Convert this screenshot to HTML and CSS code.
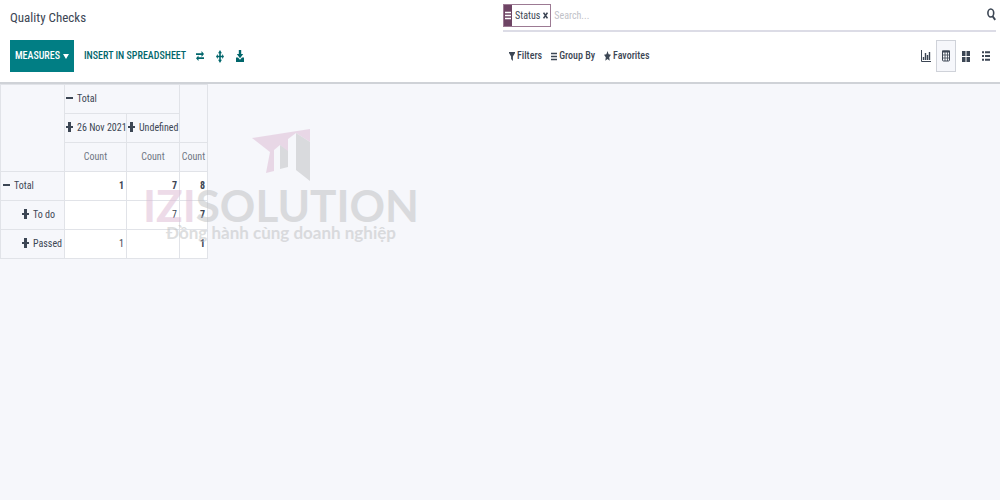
FILE: index.html
```
<!DOCTYPE html>
<html lang="en">

<head>
  <meta charset="UTF-8">
  <meta name="viewport" content="width=device-width, initial-scale=1.0">
  <title>Quality Checks</title>
  <link rel="stylesheet" href="styles.css">
</head>

<body>
  <header class="control-panel">
    <div class="panel-row">
      <h1 class="title">Quality Checks</h1>
      <div class="search-box">
        <div class="facet">
          <span class="facet-icon">
            <svg width="6" height="9" viewBox="0 0 6 9"><path d="M0 1.5h6M0 4.5h6M0 7.5h6" stroke="currentColor" stroke-width="1.6"/></svg>
          </span>
          <span class="facet-label">Status</span>
          <button class="facet-remove" type="button" aria-label="Remove">
            <svg width="5" height="7" viewBox="0 0 5 7"><path d="M.6.7l3.8 5.6M4.4.7L.6 6.3" stroke="currentColor" stroke-width="1.5"/></svg>
          </button>
        </div>
        <input class="search-input" type="text" placeholder="Search..." aria-label="Search">
        <button class="icon-btn" type="button" aria-label="Search">
          <svg width="9" height="13" viewBox="0 0 9 13"><ellipse cx="3.8" cy="5" rx="2.9" ry="4" fill="none" stroke="currentColor" stroke-width="1.6"/><path d="M5.6 8.3l2.6 3.6" stroke="currentColor" stroke-width="1.9"/></svg>
        </button>
      </div>
    </div>

    <div class="panel-row panel-row-bottom">
      <div class="actions">
        <button class="btn btn-primary" type="button">MEASURES
          <svg width="6" height="5" viewBox="0 0 6 5"><path d="M0 0h6L3 5z" fill="currentColor"/></svg>
        </button>
        <button class="btn btn-link" type="button">INSERT IN SPREADSHEET</button>
        <div class="tools">
          <button class="icon-btn" type="button" aria-label="Flip axis">
            <svg width="8" height="10" viewBox="0 0 8 10"><path d="M0 2.2h5.500V0L8 3 5.500 6V3.900H0zM8 6.200H2.500V4.500L0 7.300l2.500 2.700V8H8z" fill="currentColor"/></svg>
          </button>
          <button class="icon-btn" type="button" aria-label="Expand all">
            <svg width="8" height="13" viewBox="0 0 8 13"><path d="M4 0l1.900 3.200H4.800v2.500h1.400V4L8 6.500 6.200 9V7.300H4.800v2.500h1.100L4 13 2.100 9.800h1.100V7.300H1.800V9L0 6.500 1.800 4v1.700h1.400V3.200H2.100z" fill="currentColor"/></svg>
          </button>
          <button class="icon-btn" type="button" aria-label="Download">
            <svg width="8" height="12" viewBox="0 0 8 12"><path d="M2.800 0h2.400v4h2L4 8.200.800 4h2z" fill="currentColor"/><path d="M0 7.500h2l2 2.300 2-2.300h2V12H0z" fill="currentColor"/></svg>
          </button>
        </div>
      </div>

      <div class="options">
        <div class="filters">
          <button class="filter-btn" type="button">
            <svg width="6" height="9" viewBox="0 0 6 9"><path d="M0 0h6v1L3.900 4.500V9L2.100 7V4.500L0 1z" fill="currentColor"/></svg>
            Filters
          </button>
          <button class="filter-btn" type="button">
            <svg width="6" height="9" viewBox="0 0 6 9"><path d="M0 1.500h6M0 4.500h6M0 7.500h6" stroke="currentColor" stroke-width="1.300"/></svg>
            Group By
          </button>
          <button class="filter-btn" type="button">
            <svg width="7" height="10" viewBox="0 0 7 10"><path d="M3.500 0l1.100 3.200L7 3.700 5.200 6.200l.5 3.600-2.200-1.700-2.200 1.700.5-3.600L0 3.700l2.400-.5z" fill="currentColor"/></svg>
            Favorites
          </button>
        </div>
        <nav class="views">
          <button class="view-btn" type="button" aria-label="Graph">
            <svg width="10" height="12" viewBox="0 0 10 12"><path d="M.5 0v11.500H10" fill="none" stroke="currentColor"/><path d="M2.500 10V7M4.500 10V3M6.500 10V5M8.500 10V2" stroke="currentColor" stroke-width="1.400"/></svg>
          </button>
          <button class="view-btn view-btn-active" type="button" aria-label="Pivot">
            <svg width="8" height="12" viewBox="0 0 8 12"><rect x=".5" y="1" width="7" height="10" rx="1" fill="none" stroke="currentColor"/><path d="M0 1.500h8" stroke="currentColor" stroke-width="2"/><path d="M0 5h8M0 8h8M3 2v9M5.500 2v9" stroke="currentColor" stroke-width=".8"/></svg>
          </button>
          <button class="view-btn" type="button" aria-label="Kanban">
            <svg width="8" height="11" viewBox="0 0 8 11"><path d="M0 0h3.500v5H0zM4.500 0H8v5H4.500zM0 6h3.500v5H0zM4.500 6H8v5H4.500z" fill="currentColor"/></svg>
          </button>
          <button class="view-btn" type="button" aria-label="List">
            <svg width="8" height="10" viewBox="0 0 8 10"><path d="M0 1.200h2M0 5h2M0 8.800h2M3 1.200h5M3 5h5M3 8.800h5" stroke="currentColor" stroke-width="1.900"/></svg>
          </button>
        </nav>
      </div>
    </div>
  </header>

  <main class="content">
    <table class="pivot">
      <colgroup>
        <col class="col-label">
        <col class="col-date">
        <col class="col-undefined">
        <col class="col-total">
      </colgroup>
      <thead>
        <tr>
          <th rowspan="3"></th>
          <th class="group" colspan="2"><span class="sign sign-minus"></span>Total</th>
          <th rowspan="2"></th>
        </tr>
        <tr>
          <th class="group"><span class="sign sign-plus"></span>26 Nov 2021</th>
          <th class="group"><span class="sign sign-plus"></span>Undefined</th>
        </tr>
        <tr>
          <th class="measure">Count</th>
          <th class="measure">Count</th>
          <th class="measure">Count</th>
        </tr>
      </thead>
      <tbody>
        <tr>
          <th class="group"><span class="sign sign-minus"></span>Total</th>
          <td class="bold">1</td>
          <td class="bold">7</td>
          <td class="bold">8</td>
        </tr>
        <tr>
          <th class="group group-child"><span class="sign sign-plus"></span>To do</th>
          <td></td>
          <td>7</td>
          <td class="bold">7</td>
        </tr>
        <tr>
          <th class="group group-child"><span class="sign sign-plus"></span>Passed</th>
          <td>1</td>
          <td></td>
          <td class="bold">1</td>
        </tr>
      </tbody>
    </table>

    <div class="watermark">
      <svg class="watermark-logo" width="58" height="52" viewBox="0 0 58 52">
        <path d="M0 9L58 0v13L44 4l-8 6v13l-8-7-6 5v21l-8 2 4-21z" fill="#dcb9d3"/>
        <path d="M28 16l8 6v16l-8 2zM44 4l14 9v39l-14-11z" fill="#bdbec0"/>
      </svg>
      <div class="watermark-name"><span class="watermark-accent">IZI</span>SOLUTION</div>
      <div class="watermark-slogan">Đồng hành cùng doanh nghiệp</div>
    </div>
  </main>
</body>

</html>
```
FILE: styles.css
```
* {
  box-sizing: border-box;
}

body {
  min-height: 100vh;
  margin: 0;
  font-family: "Roboto Condensed", "Liberation Sans Narrow", Roboto, sans-serif;
  font-size: 10px;
  line-height: 16px;
  color: #3c4654;
  background: #f6f7fb;
}

svg {
  display: block;
}

button {
  padding: 0;
  font: inherit;
  color: inherit;
  background: none;
  border: 0;
  cursor: pointer;
}

/* control panel */
.control-panel {
  padding: 4px 4px 10px 10px;
  background: #fff;
  border-bottom: 2px solid #cfd2d7;
}

.panel-row {
  display: grid;
  grid-template-columns: 1fr 1fr;
  align-items: center;
}

.panel-row-bottom {
  margin-top: 8px;
}

.title {
  margin: 0;
  font-size: 13px;
  font-weight: 400;
  line-height: 28px;
}

.search-box {
  display: flex;
  align-items: flex-start;
  height: 28px;
  border-bottom: 2px solid #dcdce6;
}

.facet {
  display: flex;
  align-items: center;
  height: 23px;
  padding-right: 2px;
  border: 1px solid #9c7a93;
}

.facet-icon {
  display: flex;
  align-items: center;
  height: 100%;
  margin-right: 3px;
  padding: 0 1px;
  color: #fff;
  background: #6e4464;
}

.facet-remove {
  margin-left: 3px;
}

.search-input {
  flex: 1;
  min-width: 0;
  height: 23px;
  padding: 0 3px;
  font: inherit;
  color: inherit;
  background: none;
  border: 0;
  outline: none;
}

.search-input::placeholder {
  color: #bfc2c8;
}

.search-box .icon-btn {
  margin-top: 4px;
}

/* buttons */
.actions,
.options,
.filters,
.tools,
.views {
  display: flex;
  align-items: center;
}

.btn {
  display: flex;
  align-items: center;
  gap: 3px;
  height: 32px;
  font-weight: 500;
  white-space: nowrap;
}

.btn-primary {
  padding: 0 5px;
  color: #fff;
  background: #017e84;
}

.btn-link {
  padding: 0 10px;
  color: #01666b;
}

.tools {
  gap: 12px;
  color: #01666b;
}

.options {
  justify-content: space-between;
}

.filters {
  gap: 9px;
  padding-left: 6px;
}

.filter-btn {
  display: flex;
  align-items: center;
  gap: 2px;
  font-weight: 500;
}

.view-btn {
  display: flex;
  align-items: center;
  justify-content: center;
  width: 20px;
  height: 32px;
}

.view-btn-active {
  background: #f6f7fb;
  border: 1px solid #cfd2d9;
}

/* pivot table */
.content {
  position: relative;
}

.pivot {
  table-layout: fixed;
  width: 207px;
  border-collapse: collapse;
}

.col-label {
  width: 64px;
}

.col-date {
  width: 62px;
}

.col-undefined {
  width: 53px;
}

.col-total {
  width: 28px;
}

.pivot th,
.pivot td {
  height: 29px;
  padding: 0 1px;
  font-weight: 400;
  white-space: nowrap;
  border: 1px solid #e1e3e8;
}

.pivot td {
  padding-right: 2px;
  text-align: right;
  background: #fff;
}

.pivot .group {
  text-align: left;
}

.pivot tbody .group {
  padding-left: 2px;
}

.pivot tbody .group-child {
  padding-left: 21px;
}

.pivot .measure {
  color: #6e7682;
  text-align: center;
}

.pivot .bold {
  font-weight: 700;
}

.sign {
  display: inline-block;
  width: 7px;
  height: 10px;
  margin-right: 4px;
  vertical-align: -1px;
  background: linear-gradient(#3c4654, #3c4654) center / 7px 2px no-repeat;
}

.sign-plus {
  background:
    linear-gradient(#3c4654, #3c4654) center / 7px 2px no-repeat,
    linear-gradient(#3c4654, #3c4654) center / 3px 10px no-repeat;
}

/* watermark lies over the table */
.watermark {
  position: absolute;
  top: 45px;
  left: 143px;
  display: flex;
  flex-direction: column;
  align-items: center;
  font-family: Lato, "Open Sans", sans-serif;
  color: #bdbec0;
  opacity: .5;
  pointer-events: none;
}

.watermark-name {
  margin-top: 4px;
  font-size: 44px;
  font-weight: 700;
  line-height: 40px;
}

.watermark-accent {
  color: #dcb9d3;
}

.watermark-slogan {
  font-size: 17px;
  font-weight: 700;
  line-height: 16px;
}
```
